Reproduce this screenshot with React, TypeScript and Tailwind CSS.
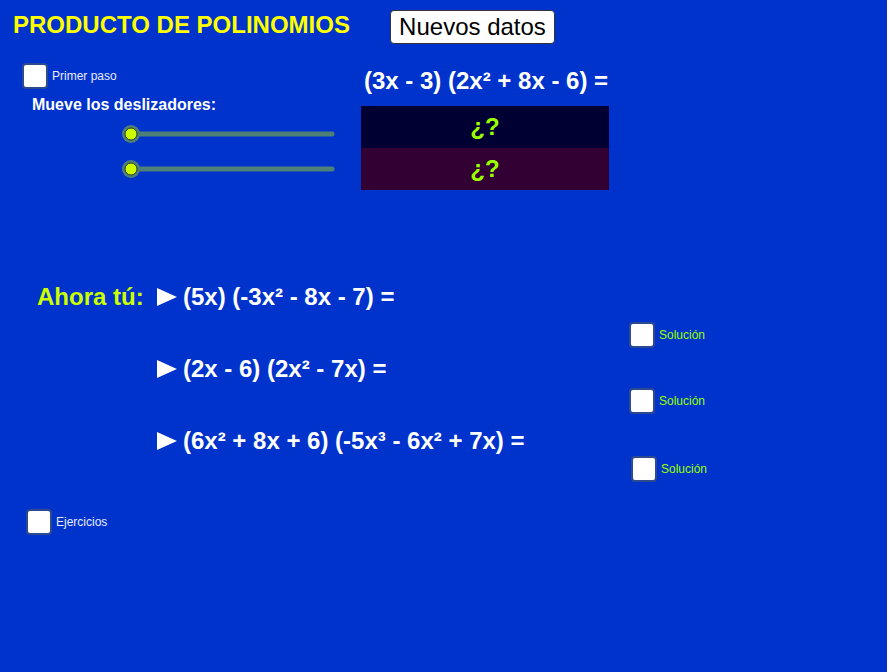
import React from "react";

const font = { fontFamily: '"Liberation Sans", Arial, sans-serif' };

function Check({ label, color, className = "" }: { label: string; color: string; className?: string }) {
  return (
    <div className={`flex items-center gap-[4px] ${className}`}>
      <div className="w-[26px] h-[26px] bg-white rounded-[4px] border-2 border-[#2d4a8f]" />
      <span className={`text-[12px] ${color} leading-none`}>{label}</span>
    </div>
  );
}

function Slider({ className = "" }: { className?: string }) {
  return (
    <svg className={className} width={224} height={28} viewBox="0 0 224 28">
      <line x1={13} y1={14} x2={214} y2={14} stroke="#4f8078" strokeWidth={5} strokeLinecap="round" />
      <circle cx={13} cy={14} r={9} fill="#4f8078" />
      <circle cx={13} cy={14} r={6} fill="#ccff00" stroke="#2a3a2a" strokeWidth={1} />
    </svg>
  );
}

function Exercise({ text, className = "" }: { text: string; className?: string }) {
  return (
    <div className={`flex items-center h-[28px] text-white font-bold text-[24px] leading-none ${className}`}>
      <svg width={20} height={18} viewBox="0 0 20 18" className="mr-[6px] shrink-0">
        <polygon points="0,0 20,9 0,18" fill="white" />
      </svg>
      <span className="whitespace-nowrap">{text}</span>
    </div>
  );
}

export default function App() {
  return (
    <div className="w-[889px] h-[672px] bg-white" style={font}>
      <div className="w-[887px] h-[672px] bg-[#0033cc] overflow-hidden flex flex-col">
        {/* header */}
        <div className="flex items-start pt-[10px] pl-[13px]">
          <div className="w-[377px] pt-[1px] text-[24px] font-bold text-[#ffff00] leading-[28px] whitespace-nowrap">
            PRODUCTO DE POLINOMIOS
          </div>
          <button className="w-[165px] h-[34px] bg-white border border-[#333] rounded-[4px] text-[24px] text-black leading-none flex items-center justify-center">
            Nuevos datos
          </button>
        </div>

        {/* first block */}
        <div className="flex mt-[19px]">
          <div className="w-[361px] pl-[22px] flex flex-col">
            <Check label="Primer paso" color="text-[#e8ecff]" />
            <div className="mt-[6px] ml-[10px] text-[16px] font-bold text-white leading-[20px]">
              Mueve los deslizadores:
            </div>
            <Slider className="mt-[5px] ml-[96px]" />
            <Slider className="mt-[7px] ml-[96px]" />
          </div>
          <div className="flex flex-col">
            <div className="mt-[4px] pl-[3px] text-[24px] font-bold text-white leading-[28px] whitespace-nowrap">
              (3x - 3) (2x² + 8x - 6) =
            </div>
            <div className="mt-[11px] w-[248px] flex flex-col">
              <div className="h-[42px] bg-[#000033] flex items-center justify-center text-[24px] font-bold text-[#99ff00]">¿?</div>
              <div className="h-[42px] bg-[#330033] flex items-center justify-center text-[24px] font-bold text-[#99ff00]">¿?</div>
            </div>
          </div>
        </div>

        {/* exercises */}
        <div className="flex mt-[93px] pl-[37px]">
          <div className="w-[120px] text-[24px] font-bold text-[#ccff00] leading-[28px]">Ahora tú:</div>
          <div className="flex flex-col">
            <Exercise text="(5x) (-3x² - 8x - 7) =" />
            <Check label="Solución" color="text-[#99ff00]" className="mt-[11px] ml-[472px]" />
            <Exercise text="(2x - 6) (2x² - 7x) =" className="mt-[7px]" />
            <Check label="Solución" color="text-[#99ff00]" className="mt-[5px] ml-[472px]" />
            <Exercise text="(6x² + 8x + 6) (-5x³ - 6x² + 7x) =" className="mt-[13px]" />
            <Check label="Solución" color="text-[#99ff00]" className="mt-[1px] ml-[474px]" />
          </div>
        </div>

        <Check label="Ejercicios" color="text-[#e8ecff]" className="mt-[27px] ml-[26px]" />
      </div>
    </div>
  );
}
